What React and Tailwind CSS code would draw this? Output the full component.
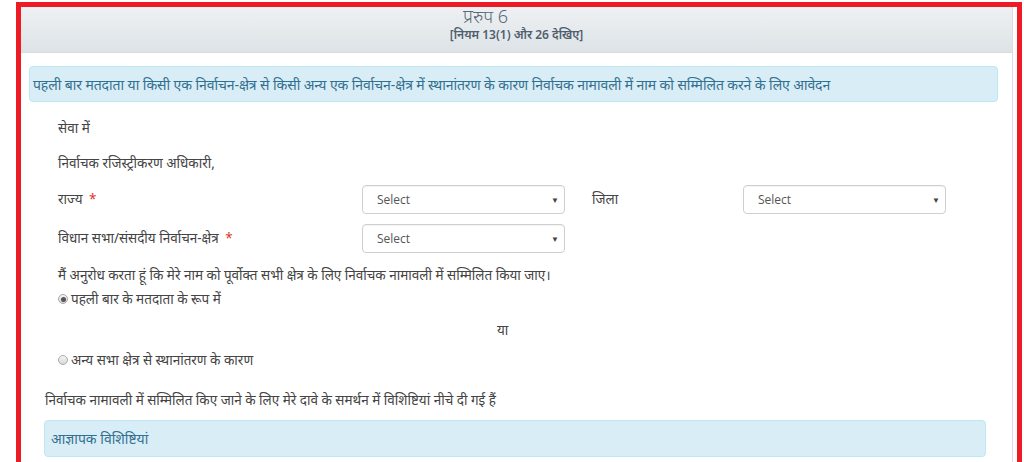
import React from 'react';

const hindi = "font-['Noto_Sans','Noto_Sans_Devanagari','Lohit_Devanagari','Mangal',sans-serif]";

const SelectBox = ({ className = '' }) => (
  <div className={`w-[203px] h-[29px] border border-[#cfcfcf] rounded-[4px] bg-white flex items-center justify-between pl-[14px] pr-[5px] shadow-[inset_0_1px_1px_rgba(0,0,0,0.05)] ${className}`}>
    <span className="font-['Open_Sans',sans-serif] text-[12px] text-[#555]">Select</span>
    <span className="text-[8px] text-[#444] leading-none">▼</span>
  </div>
);

const Radio = ({ checked }) => (
  <span className="w-[10px] h-[10px] rounded-full border border-[#aaa] bg-gradient-to-b from-[#f4f4f4] to-[#d8d8d8] flex items-center justify-center mr-[3px]">
    {checked && <span className="w-[5px] h-[5px] rounded-full bg-[#555]" />}
  </span>
);

const Star = () => <span className="text-[#e0342a] ml-[3px]">*</span>;

export default function App() {
  return (
    <div className={`w-[1024px] h-[462px] bg-white overflow-hidden pl-[16px] pt-[2px] ${hindi}`}>
      <div className="w-[1006px] h-[470px] border-[5px] border-[#ed1c24] bg-white">
        <div className="w-[992px] h-full border-r border-[#dcdcdc] flex flex-col">
          {/* Header */}
          <div className="h-[46px] bg-gradient-to-b from-[#eef1f3] to-[#dde3e7] border-b border-[#d6dbdf] flex flex-col items-center text-[#5b6a78]">
            <div className="text-[18px] leading-[20px] mt-[-1px] mr-[62px] font-light">प्ररुप 6</div>
            <div className="text-[12px] font-semibold leading-[18px] text-[#4f5f6e]">[नियम 13(1) और 26 देखिए]</div>
          </div>

          {/* Info box */}
          <div className="ml-[8px] mt-[13px] w-[969px] h-[36px] bg-[#d9edf7] border border-[#bce8f1] rounded-[4px] flex items-center pl-[3px] text-[14px] text-[#31708f] tracking-[-0.1px]">
            पहली बार मतदाता या किसी एक निर्वाचन-क्षेत्र से किसी अन्य एक निर्वाचन-क्षेत्र में स्थानांतरण के कारण निर्वाचक नामावली में नाम को सम्मिलित करने के लिए आवेदन
          </div>

          {/* Body */}
          <div className="pl-[37px] text-[13.5px] text-[#444]">
            <div className="mt-[17px] h-[18px] leading-[18px]">सेवा में</div>
            <div className="mt-[17px] h-[18px] leading-[18px]">निर्वाचक रजिस्ट्रीकरण अधिकारी,</div>

            <div className="mt-[13px] flex items-center h-[29px]">
              <div className="w-[304px]">राज्य <Star /></div>
              <SelectBox />
              <div className="w-[178px] pl-[27px]">जिला</div>
              <SelectBox />
            </div>

            <div className="mt-[10px] flex items-center h-[29px]">
              <div className="w-[304px]">विधान सभा/संसदीय निर्वाचन-क्षेत्र <Star /></div>
              <SelectBox />
            </div>

            <div className="mt-[13px] h-[18px] leading-[18px]">मैं अनुरोध करता हूं कि मेरे नाम को पूर्वोक्त सभी क्षेत्र के लिए निर्वाचक नामावली में सम्मिलित किया जाए।</div>
            <div className="mt-[6px] h-[18px] flex items-center"><Radio checked />पहली बार के मतदाता के रूप में</div>
            <div className="mt-[13px] h-[18px] leading-[18px] pl-[439px]">या</div>
            <div className="mt-[12px] h-[18px] flex items-center"><Radio />अन्य सभा क्षेत्र से स्थानांतरण के कारण</div>
          </div>

          <div className="pl-[24px] mt-[22px] h-[18px] leading-[18px] text-[13.5px] text-[#444]">निर्वाचक नामावली में सम्मिलित किए जाने के लिए मेरे दावे के समर्थन में विशिष्टियां नीचे दी गई हैं</div>

          <div className="ml-[23px] mt-[11px] w-[942px] h-[37px] bg-[#d9edf7] border border-[#bce8f1] rounded-[4px] flex items-center pl-[6px] text-[14px] text-[#31708f]">
            आज्ञापक विशिष्टियां
          </div>
        </div>
      </div>
    </div>
  );
}
